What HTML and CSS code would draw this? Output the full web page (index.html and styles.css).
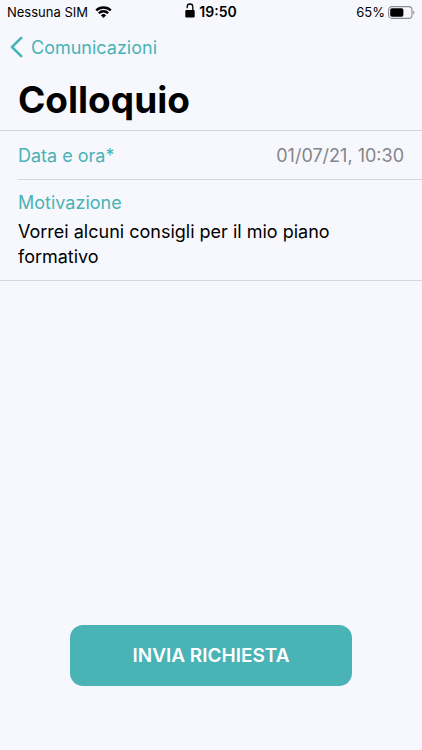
FILE: index.html
```html
<!DOCTYPE html>
<html lang="it">
<head>
<meta charset="utf-8">
<meta name="viewport" content="width=device-width, initial-scale=1">
<title>Colloquio</title>
<link rel="stylesheet" href="styles.css">
</head>
<body>
<div class="status">
  <div class="status-group">
    <span>Nessuna SIM</span>
    <svg class="wifi" viewBox="0 0 17 12" aria-hidden="true">
      <path d="M1.2 4.5a10.4 10.4 0 0 1 14.6 0M3.8 7.2a6.7 6.7 0 0 1 9.4 0" fill="none" stroke="currentColor" stroke-width="2.3"/>
      <path d="M8.5 12 5.9 9.3a3.8 3.8 0 0 1 5.2 0Z" fill="currentColor"/>
    </svg>
  </div>
  <div class="status-group status-time">
    <svg class="lock" viewBox="0 0 10 15" aria-hidden="true">
      <path d="M2.2 5.2V3.8a2.8 2.8 0 0 1 5.6 0V8" fill="none" stroke="currentColor" stroke-width="1.3"/>
      <rect x="0.3" y="7" width="9.4" height="7.6" rx="1" fill="currentColor"/>
    </svg>
    <span>19:50</span>
  </div>
  <div class="status-group status-end">
    <span>65%</span>
    <svg class="battery" viewBox="0 0 27 13" aria-hidden="true">
      <rect x="0.6" y="0.6" width="23.4" height="11.8" rx="3.4" fill="none" stroke="#8b8c90" stroke-width="1.1"/>
      <rect x="2.2" y="2.2" width="13.2" height="8.6" rx="1.8" fill="#000"/>
      <path d="M25.2 4.5a2.3 2.3 0 0 1 0 4Z" fill="#8b8c90"/>
    </svg>
  </div>
</div>
<header class="header">
  <a class="back" href="#">
    <svg class="chevron" viewBox="0 0 13 22" aria-hidden="true">
      <path d="M11.2 1.8 2 11l9.2 9.2" fill="none" stroke="currentColor" stroke-width="2.6" stroke-linecap="round" stroke-linejoin="round"/>
    </svg>
    <span>Comunicazioni</span>
  </a>
  <h1 class="title">Colloquio</h1>
</header>
<form class="form">
  <div class="fields">
    <div class="field-row">
      <label class="label" for="date">Data e ora*</label>
      <input class="date" id="date" type="text" value="01/07/21, 10:30">
    </div>
    <div class="field-stack">
      <label class="label" for="reason">Motivazione</label>
      <textarea class="reason" id="reason" rows="2">Vorrei alcuni consigli per il mio piano formativo</textarea>
    </div>
  </div>
  <button class="submit" type="submit">INVIA RICHIESTA</button>
</form>
</body>
</html>
```
FILE: styles.css
```css
* {
  box-sizing: border-box;
}

body {
  --teal: #49b3b6;
  --line: #d5d6db;
  margin: 0;
  min-height: 100vh;
  display: flex;
  flex-direction: column;
  background: #f7f8fd;
  color: #000;
  font-family: Inter, "Liberation Sans", sans-serif;
  font-size: 18px;
  line-height: 25px;
}

.status {
  display: grid;
  grid-template-columns: 1fr auto 1fr;
  padding: 0 7px;
  font-size: 13px;
  line-height: 24px;
}

.status-group {
  display: flex;
  align-items: center;
  gap: 7px;
}

.status-time {
  gap: 4px;
  font-size: 14px;
  font-weight: 600;
}

.status-end {
  justify-content: flex-end;
  gap: 3px;
}

.wifi {
  width: 17px;
  height: 12px;
}

.lock {
  width: 10px;
  height: 15px;
  margin-bottom: 4px;
}

.battery {
  width: 27px;
  height: 13px;
}

.header {
  padding: 0 18px;
  border-bottom: 1px solid var(--line);
}

.back {
  display: inline-flex;
  align-items: center;
  gap: 8px;
  height: 46px;
  margin-left: -8px;
  color: var(--teal);
  text-decoration: none;
}

.chevron {
  width: 13px;
  height: 22px;
}

.title {
  margin: 0;
  padding: 8px 0;
  font-size: 37px;
  line-height: 44px;
  font-weight: 700;
}

.form {
  flex: 1;
  display: flex;
  flex-direction: column;
  justify-content: space-between;
  align-items: center;
  padding-bottom: 64px;
}

.fields {
  width: 100%;
  padding-left: 18px;
  border-bottom: 1px solid var(--line);
}

.label {
  color: var(--teal);
}

.field-row {
  display: flex;
  align-items: center;
  justify-content: space-between;
  height: 49px;
  padding-right: 18px;
  border-bottom: 1px solid var(--line);
}

.field-stack {
  display: flex;
  flex-direction: column;
  gap: 4px;
  padding: 10px 18px 11px 0;
}

.date,
.reason {
  border: 0;
  padding: 0;
  background: none;
  font: inherit;
}

.date {
  flex: 1;
  min-width: 0;
  color: #858589;
  text-align: right;
}

.reason {
  display: block;
  width: 100%;
  resize: none;
  overflow: hidden;
  color: #000;
}

.submit {
  width: 66.6%;
  height: 61px;
  border: 0;
  border-radius: 13px;
  background: var(--teal);
  color: #fff;
  font: inherit;
  font-size: 19px;
  font-weight: 600;
}
```
